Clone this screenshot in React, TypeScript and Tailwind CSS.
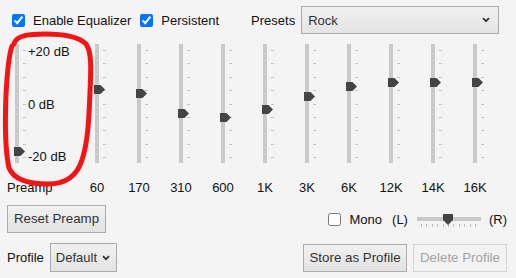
import React from "react";

const bands = [
  { label: "60", value: 5.4 },
  { label: "170", value: 3.6 },
  { label: "310", value: -3.6 },
  { label: "600", value: -5.4 },
  { label: "1K", value: -2.1 },
  { label: "3K", value: 2.8 },
  { label: "6K", value: 6.2 },
  { label: "12K", value: 8 },
  { label: "14K", value: 8 },
  { label: "16K", value: 8 },
];

const ticks = [0, 1, 2, 3, 4, 5, 6, 7, 8];
const hTicks = [0, 1, 2, 3, 4, 5, 6, 7, 8, 9, 10];

// vertical slider, range -20..+20 dB
const VSlider = ({ value }: { value: number }) => {
  const top = 59.5 - (value * 53.5) / 20 - 4.5;
  return (
    <div className="relative w-[4px] h-[119px] bg-[#c9c9c9]">
      {ticks.map((i) => (
        <div
          key={i}
          className="absolute left-[8px] w-[3px] h-px bg-[#c2c2c2]"
          style={{ top: 6 + i * 13.375 }}
        />
      ))}
      <svg
        className="absolute left-[-1px]"
        style={{ top }}
        width="11"
        height="9"
        viewBox="0 0 11 9"
      >
        <path d="M0 0H6.5L11 4.5L6.5 9H0Z" fill="#444" />
      </svg>
    </div>
  );
};

const Chevron = () => (
  <svg width="8" height="6" viewBox="0 0 8 6">
    <path d="M1 1.2L4 4.2L7 1.2" fill="none" stroke="#333" strokeWidth="1.7" />
  </svg>
);

const btn =
  "h-[28px] border border-[#adadad] bg-linear-to-b from-[#f1f1f1] to-[#e2e2e2] text-[#333] text-[13.33px] leading-none";

export default function App() {
  return (
    <div className="relative w-[516px] h-[278px] overflow-hidden bg-[#f4f4f4] text-[13px] leading-[15px] text-[#111] font-['Liberation_Sans',Arial,sans-serif]">
      {/* top row */}
      <div className="flex items-center h-[28px] mt-[6px] pl-[12px]">
        <input type="checkbox" defaultChecked className="m-0 w-[13px] h-[13px]" />
        <span className="ml-[8px]">Enable Equalizer</span>
        <input type="checkbox" defaultChecked className="m-0 ml-[9px] w-[13px] h-[13px]" />
        <span className="ml-[8px]">Persistent</span>
        <span className="ml-[32px]">Presets</span>
        <div className="ml-[6px] flex items-center justify-between w-[198px] h-[28px] border border-[#aaaaaa] bg-linear-to-b from-[#f0f0f0] to-[#e4e4e4] pl-[6px] pr-[8px] text-[#333]">
          <span>Rock</span>
          <Chevron />
        </div>
      </div>

      {/* sliders */}
      <div className="flex mt-[10px]">
        <div className="w-[76px] flex flex-col">
          <div className="flex ml-[15px]">
            <VSlider value={-18.1} />
            <div className="ml-[9px] h-[120px] flex flex-col justify-between">
              <span>+20 dB</span>
              <span>0 dB</span>
              <span>-20 dB</span>
            </div>
          </div>
          <span className="mt-[16px] pl-[7px]">Preamp</span>
        </div>
        {bands.map((b) => (
          <div key={b.label} className="w-[42px] flex flex-col items-center">
            <VSlider value={b.value} />
            <span className="mt-[17px]">{b.label}</span>
          </div>
        ))}
      </div>

      {/* reset + mono/balance */}
      <div className="flex items-center justify-between mt-[10px] pl-[7px] pr-[9px]">
        <button className={`${btn} w-[99px]`}>Reset Preamp</button>
        <div className="flex items-center">
          <input type="checkbox" className="m-0 w-[13px] h-[13px]" />
          <span className="ml-[9px]">Mono</span>
          <span className="ml-[10px]">(L)</span>
          <div className="relative ml-[9px] w-[64px] h-[4px] bg-[#c9c9c9]">
            {hTicks.map((i) => (
              <div
                key={i}
                className="absolute top-[7px] w-px h-[3px] bg-[#bdbdbd]"
                style={{ left: 4 + i * 5.4 }}
              />
            ))}
            <svg className="absolute left-[26px] top-[-3px]" width="10" height="11" viewBox="0 0 10 11">
              <path d="M0 0H10V6L5 11L0 6Z" fill="#444" />
            </svg>
          </div>
          <span className="ml-[8px]">(R)</span>
        </div>
      </div>

      {/* profile row */}
      <div className="flex items-center justify-between mt-[10px] pl-[7px] pr-[9px]">
        <div className="flex items-center">
          <span>Profile</span>
          <div className="ml-[6px] flex items-center justify-between w-[67px] h-[29px] border border-[#aaaaaa] bg-linear-to-b from-[#f0f0f0] to-[#e4e4e4] pl-[5px] pr-[6px] text-[#333]">
            <span>Default</span>
            <Chevron />
          </div>
        </div>
        <div className="flex items-center gap-[6px]">
          <button className={`${btn} w-[104px]`}>Store as Profile</button>
          <button
            disabled
            className="h-[28px] w-[94px] border border-[#d4d4d4] bg-[#f3f3f3] text-[#a3a3a3] text-[13.33px] leading-none"
          >
            Delete Profile
          </button>
        </div>
      </div>

      {/* red marker annotation */}
      <svg className="absolute inset-0 pointer-events-none" width="516" height="278" viewBox="0 0 516 278">
        <path
          d="M14 44 C 16 35, 30 34, 45 34 C 62 34, 78 36, 86 44 C 92 52, 91 70, 90 92 C 89 118, 88 142, 82 160 C 77 176, 66 184, 48 184 C 30 184, 14 180, 9 168 C 5 150, 5 120, 6 95 C 7 75, 8 58, 12 46"
          fill="none"
          stroke="#f41414"
          strokeWidth="5"
          strokeLinecap="round"
        />
      </svg>
    </div>
  );
}
